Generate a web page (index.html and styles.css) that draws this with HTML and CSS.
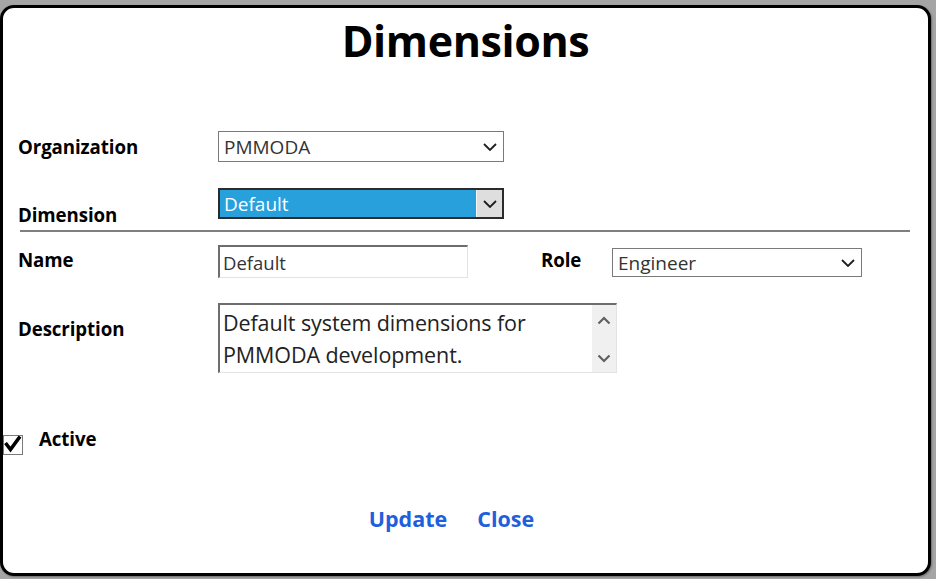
FILE: index.html
```html
<!DOCTYPE html>
<html lang="en">
<head>
<meta charset="utf-8">
<title>Dimensions</title>
<link rel="stylesheet" href="styles.css">
</head>
<body>
<div class="dialog">
  <h1 class="title">Dimensions</h1>

  <div class="row row-org">
    <span class="label label-mid">Organization</span>
    <div class="select select-org">
      <span class="select-text">PMMODA</span>
      <svg class="chev" width="14" height="8" viewBox="0 0 14 8"><path d="M1 1 L7 7 L13 1" fill="none" stroke="#1e1e1e" stroke-width="1.8"/></svg>
    </div>
  </div>

  <div class="row row-dim">
    <span class="label label-low">Dimension</span>
    <div class="select select-dim">
      <span class="select-text dim-text">Default</span>
      <span class="dim-btn">
        <svg class="chev" width="14" height="8" viewBox="0 0 14 8"><path d="M1 1 L7 7 L13 1" fill="none" stroke="#1e1e1e" stroke-width="1.8"/></svg>
      </span>
    </div>
  </div>

  <div class="divider"></div>

  <div class="row row-name">
    <span class="label label-name">Name</span>
    <div class="input">Default</div>
    <span class="label role-label">Role</span>
    <div class="select select-role">
      <span class="select-text">Engineer</span>
      <svg class="chev" width="14" height="8" viewBox="0 0 14 8"><path d="M1 1 L7 7 L13 1" fill="none" stroke="#1e1e1e" stroke-width="1.8"/></svg>
    </div>
  </div>

  <div class="row row-desc">
    <span class="label label-desc">Description</span>
    <div class="textarea">
      <div class="ta-text">Default system dimensions for<br>PMMODA development.</div>
      <div class="scrollbar">
        <svg width="14" height="9" viewBox="0 0 14 9"><path d="M1.5 7.5 L7 2 L12.5 7.5" fill="none" stroke="#606060" stroke-width="2.2"/></svg>
        <svg width="14" height="9" viewBox="0 0 14 9"><path d="M1.5 1.5 L7 7 L12.5 1.5" fill="none" stroke="#606060" stroke-width="2.2"/></svg>
      </div>
    </div>
  </div>

  <div class="row row-active">
    <span class="checkbox">
      <svg class="check" width="22" height="22" viewBox="0 0 22 22"><path d="M3.5 10 L8.5 16.5 L18 3.5" fill="none" stroke="#000" stroke-width="3.6"/></svg>
    </span>
    <span class="label active-label">Active</span>
  </div>

  <div class="actions">
    <a class="action" href="#">Update</a>
    <a class="action" href="#">Close</a>
  </div>
</div>
</body>
</html>
```

FILE: styles.css
```css
html, body {
  margin: 0;
  padding: 0;
}
body {
  background: #a5a5a5;
  height: 579px;
  overflow: hidden;
  font-family: "Open Sans", "Noto Sans", sans-serif;
  color: #000;
}
.dialog {
  box-sizing: border-box;
  margin-top: 5px;
  width: 931px;
  height: 571px;
  border: 3px solid #000;
  border-radius: 14px;
  background: #fff;
  box-shadow: 1px 1px 2px rgba(0,0,0,0.35);
  overflow: hidden;
}
.title {
  margin: 11px 0 0 0;
  font-size: 43px;
  line-height: 44px;
  font-weight: 700;
  text-align: center;
  letter-spacing: -0.4px;
}
.row {
  display: flex;
  padding-left: 15px;
}
.label {
  width: 200px;
  flex: none;
  font-size: 18.7px;
  line-height: 20px;
  font-weight: 700;
  letter-spacing: -0.1px;
}
.row-org {
  margin-top: 68px;
  height: 31px;
  align-items: center;
}
.row-dim {
  margin-top: 26px;
  align-items: flex-start;
}
.label-low {
  margin-top: 17px;
}
.select {
  box-sizing: border-box;
  display: flex;
  align-items: center;
  justify-content: space-between;
  border: 1px solid #7a7a7a;
  background: #fff;
  font-size: 19px;
  color: #333;
  padding: 0 6px 0 5px;
}
.select-org {
  width: 286px;
  height: 31px;
}
.select-dim {
  width: 286px;
  height: 31px;
  border: 2px solid #2b2b2b;
  padding: 0;
  background: #28a0dc;
  align-items: stretch;
}
.dim-text {
  color: #fff;
  padding-left: 4px;
  display: flex;
  align-items: center;
}
.dim-btn {
  width: 25px;
  background: #dedede;
  border-left: 1px solid #f4f4f4;
  display: flex;
  align-items: center;
  justify-content: center;
}
.divider {
  margin: 5px 0 0 17px;
  width: 890px;
  height: 2px;
  background: #7f7f7f;
}
.row-name {
  margin-top: 13px;
  align-items: flex-start;
}
.label-name {
  margin-top: 5px;
}
.input {
  box-sizing: border-box;
  width: 250px;
  height: 33px;
  border-top: 2px solid #6d6d6d;
  border-left: 2px solid #6d6d6d;
  border-right: 1px solid #e3e3e3;
  border-bottom: 1px solid #e3e3e3;
  font-size: 18.5px;
  line-height: 28px;
  padding: 2px 0 0 3px;
  color: #333;
}
.role-label {
  width: 41px;
  margin: 5px 0 0 73px;
}
.select-role {
  margin: 3px 0 0 30px;
  width: 250px;
  height: 29px;
}
.row-desc {
  margin-top: 25px;
  align-items: flex-start;
}
.label-desc {
  margin-top: 16px;
}
.textarea {
  box-sizing: border-box;
  width: 399px;
  height: 70px;
  display: flex;
  border-top: 2px solid #6d6d6d;
  border-left: 2px solid #6d6d6d;
  border-right: 1px solid #e3e3e3;
  border-bottom: 1px solid #e3e3e3;
}
.ta-text {
  flex: 1;
  font-size: 21.5px;
  line-height: 32px;
  padding: 2px 0 0 3px;
  color: #222;
  letter-spacing: -0.1px;
}
.scrollbar {
  width: 24px;
  background: #f0f0f0;
  display: flex;
  flex-direction: column;
  align-items: center;
  justify-content: space-between;
  padding: 11px 0 9px;
  box-sizing: border-box;
}
.row-active {
  margin-top: 60px;
  padding-left: 0;
  align-items: flex-start;
}
.checkbox {
  position: relative;
  box-sizing: border-box;
  width: 20px;
  height: 20px;
  margin-top: 2px;
  border: 1px solid #7a7a7a;
  background: #fff;
}
.check {
  position: absolute;
  left: -2px;
  top: -3px;
}
.active-label {
  margin: -4px 0 0 16px;
  width: auto;
}
.actions {
  display: flex;
  justify-content: center;
  gap: 30px;
  margin-top: 52px;
  padding-right: 28px;
}
.action {
  font-size: 21.5px;
  line-height: 24px;
  font-weight: 700;
  color: #1f5fdc;
  text-decoration: none;
}
```
